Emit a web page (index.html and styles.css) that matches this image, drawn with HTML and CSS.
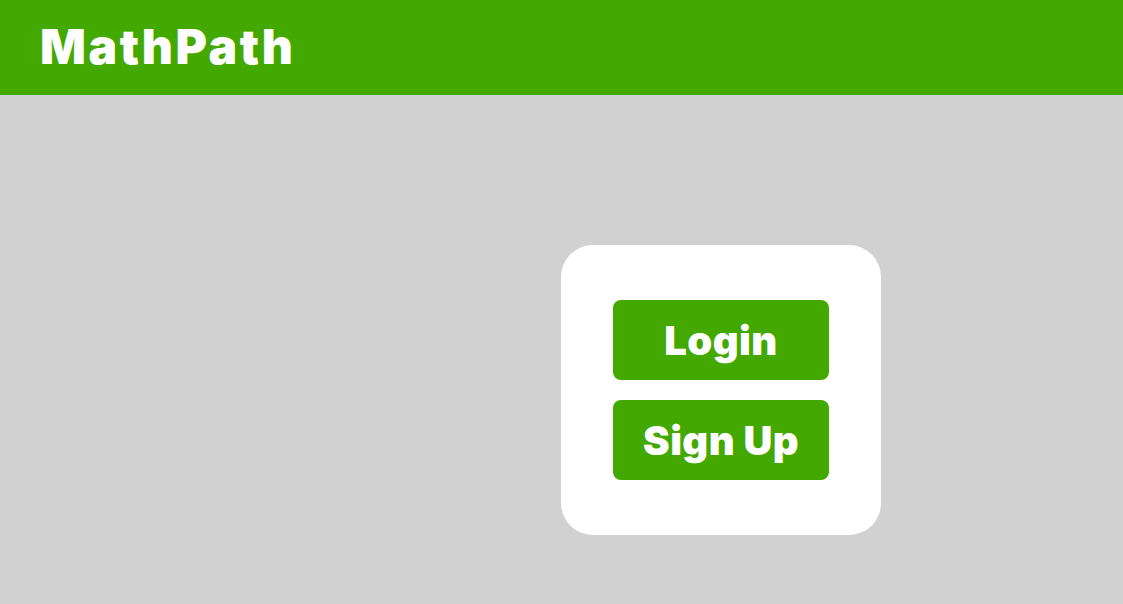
FILE: index.html
```html
<!DOCTYPE html>
<html lang="en">
<head>
<meta charset="utf-8">
<title>MathPath</title>
<link rel="stylesheet" href="styles.css">
</head>
<body>
<header class="topbar">
  <h1 class="brand">MathPath</h1>
</header>
<main class="stage">
  <div class="card">
    <button class="btn">Login</button>
    <button class="btn">Sign Up</button>
  </div>
</main>
</body>
</html>
```

FILE: styles.css
```css
html, body {
  margin: 0;
  padding: 0;
  height: 100%;
}
body {
  background: #d1d1d1;
  font-family: "Inter", "Noto Sans", sans-serif;
  overflow: hidden;
}
.topbar {
  height: 95px;
  background: #43a900;
  display: flex;
  align-items: center;
  padding-left: 40px;
  box-sizing: border-box;
}
.brand {
  margin: 0;
  color: #fff;
  font-size: 48px;
  font-weight: 900;
  letter-spacing: 2.6px;
  line-height: 1;
  padding-bottom: 1px;
}
.stage {
  display: flex;
  padding: 150px 0 0 561px;
}
.card {
  width: 320px;
  height: 290px;
  box-sizing: border-box;
  background: #fff;
  border-radius: 32px;
  display: flex;
  flex-direction: column;
  align-items: center;
  padding-top: 55px;
  gap: 20px;
}
.btn {
  width: 216px;
  height: 80px;
  border: none;
  border-radius: 8px;
  background: #43a900;
  color: #fff;
  font-family: inherit;
  font-size: 40px;
  font-weight: 900;
  letter-spacing: 0.4px;
  padding: 0;
  cursor: pointer;
}
```
